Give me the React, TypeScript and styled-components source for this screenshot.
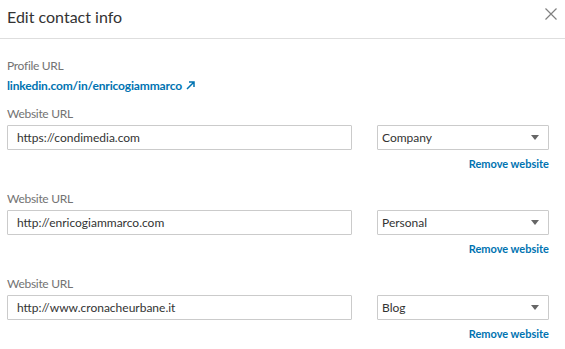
import React from "react";
import styled, { createGlobalStyle } from "styled-components";

const GlobalStyle = createGlobalStyle`
  html, body {
    margin: 0;
    padding: 0;
    background: #ffffff;
  }
  body {
    font-family: "Lato", "Open Sans", sans-serif;
    -webkit-font-smoothing: antialiased;
  }
`;

interface Website {
  url: string;
  type: string;
}

const websites: Website[] = [
  { url: "https://condimedia.com", type: "Company" },
  { url: "http://enricogiammarco.com", type: "Personal" },
  { url: "http://www.cronacheurbane.it", type: "Blog" },
];

const Modal = styled.div`
  width: 565px;
  height: 349px;
  overflow: hidden;
  background: #fff;
`;

const Header = styled.header`
  display: flex;
  align-items: flex-start;
  justify-content: space-between;
  box-sizing: border-box;
  height: 39px;
  padding: 7px 8px 0 7px;
  border-bottom: 1px solid #dedede;
`;

const Title = styled.h2`
  margin: 0;
  font-size: 16px;
  line-height: 20px;
  font-weight: 400;
  color: #333;
`;

const CloseButton = styled.button`
  display: flex;
  width: 12px;
  height: 12px;
  margin-top: 1px;
  padding: 0;
  border: 0;
  background: none;
  cursor: pointer;
`;

const Body = styled.div`
  display: flex;
  flex-direction: column;
  padding: 19px 16px 0 7px;
`;

const Label = styled.div`
  font-size: 12px;
  line-height: 15px;
  letter-spacing: -0.3px;
  color: #737373;
`;

const ProfileLink = styled.a`
  display: inline-flex;
  align-items: center;
  align-self: flex-start;
  gap: 4px;
  margin-top: 5px;
  font-size: 12px;
  line-height: 15px;
  font-weight: 700;
  letter-spacing: -0.15px;
  color: #0073b1;
  text-decoration: none;
`;

const Group = styled.div`
  display: flex;
  flex-direction: column;
  margin-top: 13px;

  & + & {
    margin-top: 20px;
  }
`;

const Row = styled.div`
  display: flex;
  justify-content: space-between;
  margin-top: 4px;
`;

const TextInput = styled.input`
  box-sizing: border-box;
  width: 345px;
  height: 25px;
  padding: 0 9px;
  border: 1px solid #cbcbcb;
  border-radius: 1px;
  font-family: inherit;
  font-size: 12px;
  color: #333;
  outline: none;
`;

const SelectBox = styled.div`
  box-sizing: border-box;
  display: flex;
  align-items: center;
  justify-content: space-between;
  width: 172px;
  height: 25px;
  padding: 0 9px 0 4px;
  border: 1px solid #cbcbcb;
  border-radius: 1px;
  font-size: 12px;
  color: #333;
`;

const Caret = styled.span`
  width: 0;
  height: 0;
  border-left: 4.5px solid transparent;
  border-right: 4.5px solid transparent;
  border-top: 5px solid #666;
`;

const RemoveLink = styled.a`
  align-self: flex-end;
  margin-top: 7px;
  font-size: 11px;
  line-height: 14px;
  font-weight: 700;
  color: #0073b1;
  cursor: pointer;
`;

const App: React.FC = () => {
  return (
    <Modal>
      <GlobalStyle />
      <Header>
        <Title>Edit contact info</Title>
        <CloseButton aria-label="Close">
          <svg width="12" height="12" viewBox="0 0 12 12">
            <path d="M0.5 0.5 L11.5 11.5 M11.5 0.5 L0.5 11.5" stroke="#808080" strokeWidth="1.2" />
          </svg>
        </CloseButton>
      </Header>
      <Body>
        <Label>Profile URL</Label>
        <ProfileLink href="#">
          linkedin.com/in/enricogiammarco
          <svg width="9" height="9" viewBox="0 0 9 9">
            <path d="M1 8 L8 1 M3 1 H8 V6" stroke="#0073b1" strokeWidth="1.5" fill="none" />
          </svg>
        </ProfileLink>
        {websites.map((w) => (
          <Group key={w.url}>
            <Label>Website URL</Label>
            <Row>
              <TextInput defaultValue={w.url} />
              <SelectBox>
                {w.type}
                <Caret />
              </SelectBox>
            </Row>
            <RemoveLink>Remove website</RemoveLink>
          </Group>
        ))}
      </Body>
    </Modal>
  );
};

export default App;
